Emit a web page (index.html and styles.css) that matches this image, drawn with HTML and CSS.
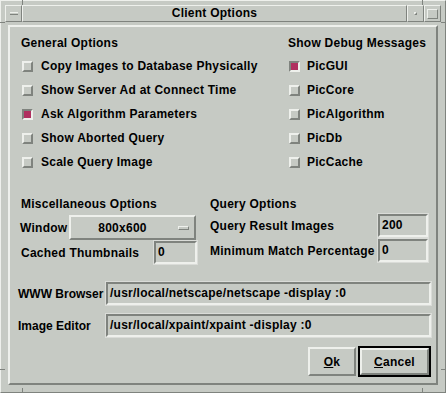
FILE: index.html
```html
<!DOCTYPE html>
<html>
<head>
<meta charset="utf-8">
<link rel="stylesheet" href="styles.css">
</head>
<body>
<div class="window">
  <span class="mark mark-tl-v"></span>
  <span class="mark mark-tr-v"></span>
  <span class="mark mark-bl-v"></span>
  <span class="mark mark-br-v"></span>
  <span class="mark mark-tl-h"></span>
  <span class="mark mark-tr-h"></span>
  <span class="mark mark-bl-h"></span>
  <span class="mark mark-br-h"></span>
  <div class="titlebar">
    <div class="tb-btn"><span class="tb-dash"></span></div>
    <div class="title">Client Options</div>
    <div class="tb-btn"><span class="tb-dot"></span></div>
    <div class="tb-btn"><span class="tb-sq"></span></div>
  </div>
  <div class="client">
    <div class="panel">
      <div class="sec-top">
        <div class="col-left">
          <div class="heading">General Options</div>
          <div class="toggle"><span class="ind"></span>Copy Images to Database Physically</div>
          <div class="toggle"><span class="ind"></span>Show Server Ad at Connect Time</div>
          <div class="toggle"><span class="ind on"></span>Ask Algorithm Parameters</div>
          <div class="toggle"><span class="ind"></span>Show Aborted Query</div>
          <div class="toggle"><span class="ind"></span>Scale Query Image</div>
        </div>
        <div class="col-right">
          <div class="heading">Show Debug Messages</div>
          <div class="toggle"><span class="ind on"></span>PicGUI</div>
          <div class="toggle"><span class="ind"></span>PicCore</div>
          <div class="toggle"><span class="ind"></span>PicAlgorithm</div>
          <div class="toggle"><span class="ind"></span>PicDb</div>
          <div class="toggle"><span class="ind"></span>PicCache</div>
        </div>
      </div>
      <div class="sec-mid">
        <div class="misc">
          <div class="heading">Miscellaneous Options</div>
          <div class="row row-window">
            <span class="lbl">Window</span>
            <div class="option"><span class="opt-text">800x600</span><span class="cascade"></span></div>
          </div>
          <div class="row row-cached">
            <span class="lbl">Cached Thumbnails</span>
            <div class="field f-small">0</div>
          </div>
        </div>
        <div class="query">
          <div class="heading">Query Options</div>
          <div class="row row-q1">
            <span class="lbl">Query Result Images</span>
            <div class="field f-num">200</div>
          </div>
          <div class="row row-q2">
            <span class="lbl">Minimum Match Percentage</span>
            <div class="field f-num">0</div>
          </div>
        </div>
      </div>
      <div class="paths">
        <div class="prow">
          <span class="plabel">WWW Browser</span>
          <div class="field f-wide">/usr/local/netscape/netscape -display :0</div>
        </div>
        <div class="prow prow-2">
          <span class="plabel">Image Editor</span>
          <div class="field f-wide">/usr/local/xpaint/xpaint -display :0</div>
        </div>
      </div>
      <div class="buttons">
        <div class="btn btn-ok"><u>O</u>k</div>
        <div class="default-frame"><div class="btn btn-cancel"><u>C</u>ancel</div></div>
      </div>
    </div>
  </div>
</div>
</body>
</html>
```

FILE: styles.css
```css
:root {
  --bg: #c6cac4;
  --lt: #eef0ec;
  --dk: #7f837e;
  --sel: #b03060;
}
html, body {
  margin: 0;
  padding: 0;
  background: var(--bg);
}
body {
  font-family: "Liberation Sans", Arial, sans-serif;
  font-weight: bold;
  font-size: 12px;
  letter-spacing: 0.25px;
  color: #000;
}
.window {
  position: relative;
  width: 446px;
  height: 393px;
  box-sizing: border-box;
  background: var(--bg);
  border: 1px solid;
  border-color: var(--lt) var(--dk) var(--dk) var(--lt);
  padding: 4px;
  display: flex;
  flex-direction: column;
}
.mark {
  position: absolute;
  background: var(--dk);
}
.mark-tl-v { left: 21px; top: -1px; width: 1px; height: 5px; }
.mark-tr-v { left: 421px; top: -1px; width: 1px; height: 5px; }
.mark-bl-v { left: 21px; bottom: -1px; width: 1px; height: 5px; }
.mark-br-v { left: 421px; bottom: -1px; width: 1px; height: 5px; }
.mark-tl-h { left: -1px; top: 21px; width: 5px; height: 1px; }
.mark-tr-h { right: -1px; top: 21px; width: 5px; height: 1px; }
.mark-bl-h { left: -1px; top: 368px; width: 5px; height: 1px; }
.mark-br-h { right: -1px; top: 368px; width: 5px; height: 1px; }

.titlebar {
  display: flex;
  height: 17px;
  flex: none;
}
.tb-btn, .title {
  box-sizing: border-box;
  border: 1px solid;
  border-color: var(--lt) var(--dk) var(--dk) var(--lt);
  display: flex;
  align-items: center;
  justify-content: center;
}
.tb-btn { width: 17px; }
.title {
  flex: 1;
  font-size: 12px;
  line-height: 15px;
}
.tb-dash {
  width: 8px;
  border-top: 1px solid var(--lt);
  border-bottom: 1px solid var(--dk);
  box-sizing: border-box;
  height: 3px;
}
.tb-dot {
  width: 3px;
  height: 3px;
  box-sizing: border-box;
  border: 1px solid;
  border-color: var(--lt) var(--dk) var(--dk) var(--lt);
}
.tb-sq {
  width: 11px;
  height: 10px;
  box-sizing: border-box;
  border: 1px solid;
  border-color: var(--lt) var(--dk) var(--dk) var(--lt);
}

.client {
  flex: 1;
  padding: 3px;
  display: flex;
}
.panel {
  flex: 1;
  box-sizing: border-box;
  border: 2px solid;
  border-color: var(--lt) var(--dk) var(--dk) var(--lt);
  padding: 9px 5px 0 10px;
  display: flex;
  flex-direction: column;
}
.heading {
  line-height: 14px;
  height: 14px;
  white-space: nowrap;
}
.sec-top {
  display: flex;
}
.col-left {
  width: 268px;
  padding-left: 1px;
  box-sizing: border-box;
}
.col-right {
  flex: 1;
}
.heading + .toggle {
  margin-top: 4px;
}
.toggle {
  display: flex;
  align-items: center;
  height: 24px;
  white-space: nowrap;
}
.ind {
  width: 11px;
  height: 11px;
  box-sizing: border-box;
  border: 2px solid;
  border-color: var(--lt) var(--dk) var(--dk) var(--lt);
  margin-left: 1px;
  margin-right: 8px;
  flex: none;
}
.col-right .ind { margin-right: 7px; }
.ind.on {
  border-color: var(--dk) var(--lt) var(--lt) var(--dk);
  background: var(--sel);
}

.sec-mid {
  display: flex;
  margin-top: 23px;
}
.misc {
  width: 177px;
}
.misc .heading { padding-left: 1px; }
.query {
  margin-left: 13px;
  width: 218px;
}
.row {
  display: flex;
  align-items: center;
  white-space: nowrap;
}
.row-window { margin-top: 4px; }
.row-cached { margin-top: 1px; }
.row-cached .lbl { padding-left: 1px; }
.row-q1 { margin-top: 3px; }
.row-q2 { margin-top: 2px; }
.lbl { flex: 1; }
.option {
  box-sizing: border-box;
  width: 127px;
  height: 25px;
  margin-right: 1px;
  border: 2px solid;
  border-color: var(--lt) var(--dk) var(--dk) var(--lt);
  display: flex;
  align-items: center;
}
.opt-text {
  flex: 1;
  text-align: center;
  padding-right: 10px;
  padding-left: 6px;
}
.cascade {
  width: 11px;
  height: 4px;
  box-sizing: border-box;
  border: 1px solid;
  border-color: var(--lt) var(--dk) var(--dk) var(--lt);
  margin-right: 5px;
}
.field {
  box-sizing: border-box;
  height: 23px;
  border: 2px solid;
  border-color: var(--dk) var(--lt) var(--lt) var(--dk);
  outline: 1px solid #dadcd8;
  padding: 0 2px;
  line-height: 19px;
  white-space: nowrap;
  overflow: hidden;
}
.f-small { width: 43px; }
.f-num { width: 50px; }
.f-wide { flex: 1; }

.paths { margin-top: 18px; }
.prow {
  display: flex;
  align-items: center;
}
.prow-2 { margin-top: 9px; }
.plabel {
  flex: none;
  width: 88px;
  margin-left: -2px;
  letter-spacing: 0;
  white-space: nowrap;
}

.buttons {
  display: flex;
  justify-content: flex-end;
  align-items: center;
  margin-top: 9px;
}
.btn {
  box-sizing: border-box;
  border: 2px solid;
  border-color: var(--lt) var(--dk) var(--dk) var(--lt);
  display: flex;
  align-items: center;
  justify-content: center;
}
.btn-ok {
  width: 48px;
  height: 29px;
  margin-right: 2px;
}
.default-frame {
  box-sizing: border-box;
  border: 2px solid #000;
  width: 73px;
  height: 31px;
  display: flex;
}
.btn-cancel {
  flex: 1;
}
```
